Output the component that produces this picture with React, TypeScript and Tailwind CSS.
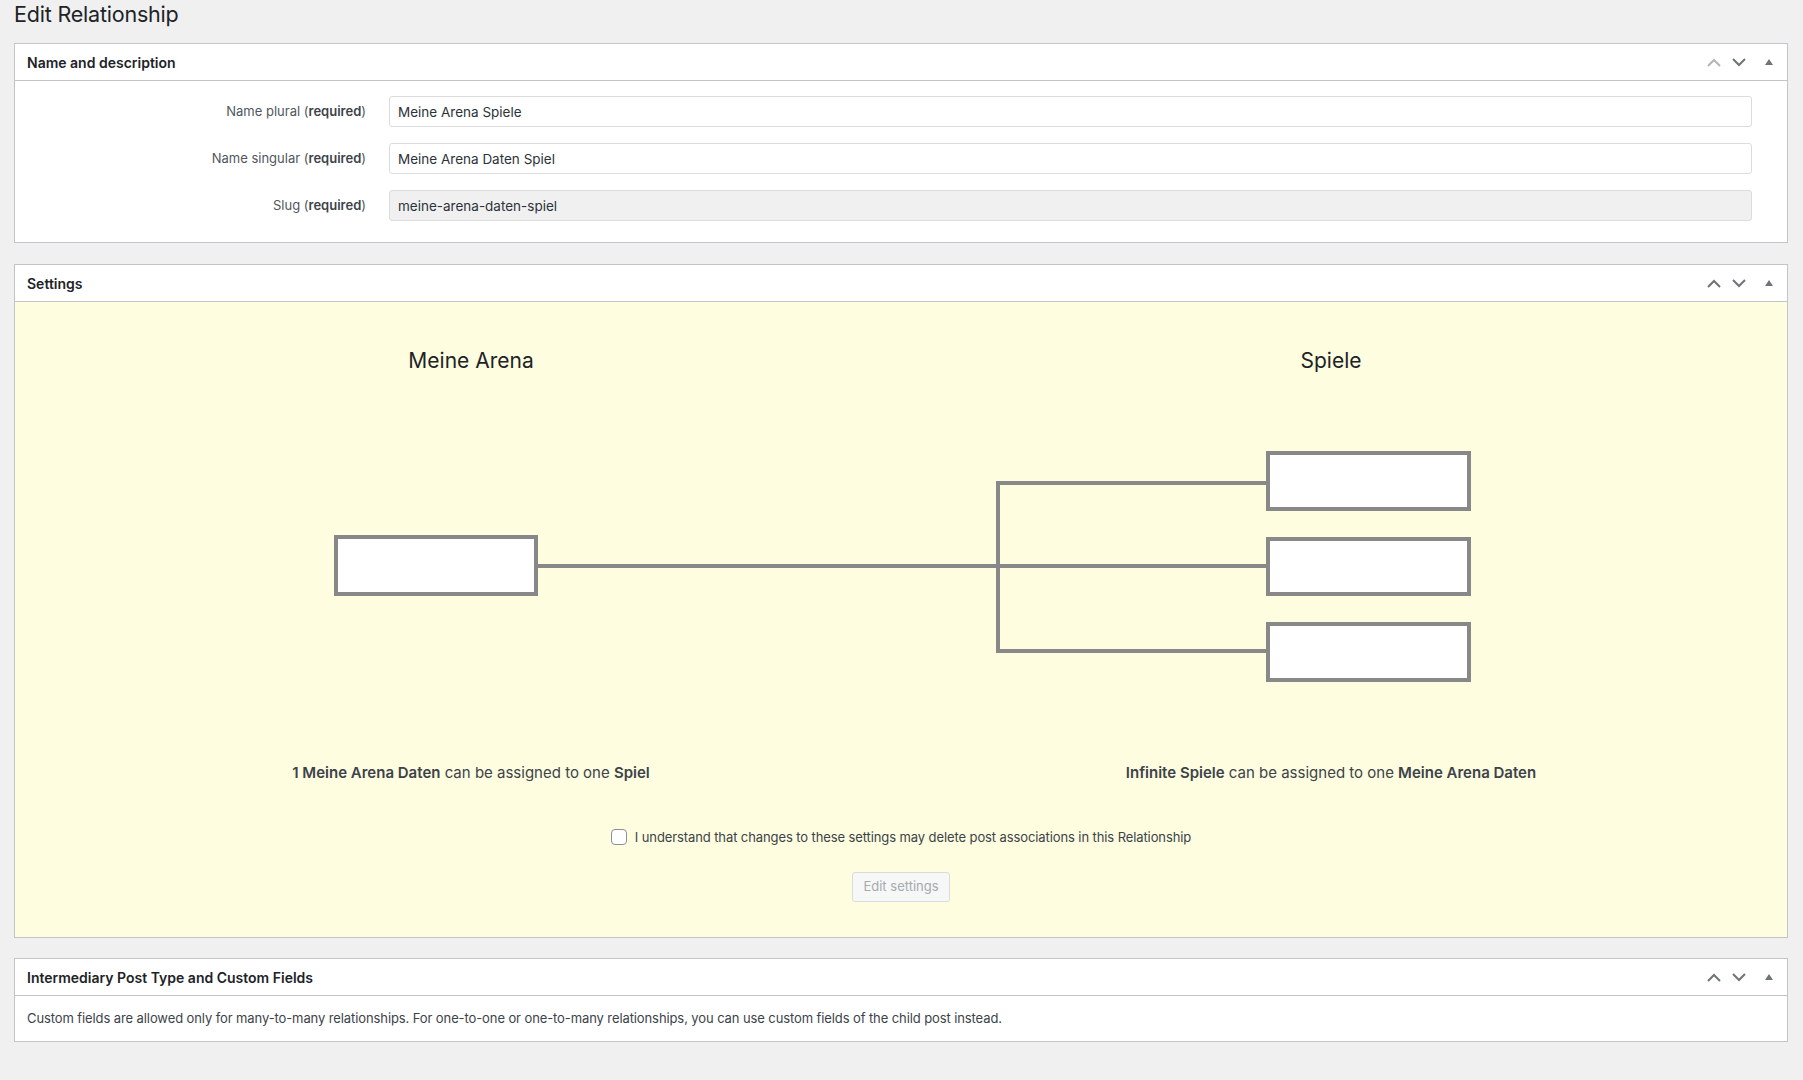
import React, { useState } from 'react';

const HeaderControls: React.FC<{ upDisabled?: boolean }> = ({ upDisabled }) => (
  <div className="flex items-center h-full">
    <button type="button" className="w-[25px] h-[36px] flex items-center justify-center">
      <svg width="14" height="9" viewBox="0 0 14 9" fill="none">
        <path d="M1 8 L7 2 L13 8" stroke={upDisabled ? '#b4b6b9' : '#6f747a'} strokeWidth="2" />
      </svg>
    </button>
    <button type="button" className="w-[25px] h-[36px] flex items-center justify-center">
      <svg width="14" height="9" viewBox="0 0 14 9" fill="none">
        <path d="M1 1 L7 7 L13 1" stroke="#6f747a" strokeWidth="2" />
      </svg>
    </button>
    <button type="button" className="w-[36px] h-[36px] flex items-center justify-center">
      <svg width="8" height="6" viewBox="0 0 8 6">
        <path d="M0 6 L4 0 L8 6 Z" fill="#6f747a" />
      </svg>
    </button>
  </div>
);

const Postbox: React.FC<{ title: string; upDisabled?: boolean; className?: string; children: React.ReactNode }> = ({
  title,
  upDisabled,
  className,
  children,
}) => (
  <div className={`bg-white border border-[#c3c4c7] ${className ?? ''}`}>
    <div className="flex items-center justify-between h-[37px] border-b border-[#c3c4c7]">
      <h2 className="pl-[12px] text-[14px] font-semibold text-[#1d2327]">{title}</h2>
      <HeaderControls upDisabled={upDisabled} />
    </div>
    {children}
  </div>
);

const FieldRow: React.FC<{ label: string; value: string; readOnly?: boolean }> = ({ label, value, readOnly }) => (
  <div className="flex items-center">
    <label className="w-[351px] text-right text-[13px] text-[#50575e]">
      {label} (<b className="font-semibold text-[#3c434a]">required</b>)
    </label>
    <input
      type="text"
      defaultValue={value}
      readOnly={readOnly}
      className={`ml-[23px] flex-1 h-[31px] px-[8px] text-[13.5px] text-[#2c3338] border border-[#dcdcde] rounded-[3px] outline-none ${
        readOnly ? 'bg-[#f0f0f1]' : 'bg-white'
      }`}
    />
  </div>
);

const Diagram: React.FC = () => (
  <svg width="1139" height="235" viewBox="0 0 1139 235" className="block mx-auto">
    <g stroke="#888888" strokeWidth="4" fill="none">
      <line x1="204" y1="117" x2="666" y2="117" />
      <polyline points="936,34 666,34 666,202 936,202" />
      <line x1="666" y1="117" x2="936" y2="117" />
    </g>
    <g stroke="#888888" strokeWidth="4" fill="#ffffff">
      <rect x="4" y="88" width="200" height="57" />
      <rect x="936" y="4" width="201" height="56" />
      <rect x="936" y="90" width="201" height="55" />
      <rect x="936" y="175" width="201" height="56" />
    </g>
  </svg>
);

export default function App() {
  const [understood, setUnderstood] = useState(false);

  return (
    <div className="min-h-screen bg-[#f0f0f1] text-[#3c434a] text-[13px] font-['Inter','Liberation_Sans',sans-serif]">
      <div className="pl-[14px] pr-[15px]">
        <h1 className="text-[21.5px] leading-[28px] font-normal text-[#1d2327] tracking-[-0.2px]">
          Edit Relationship
        </h1>

        <Postbox title="Name and description" upDisabled className="mt-[15px] mb-[21px]">
          <div className="pt-[15px] pb-[21px] pr-[35px] flex flex-col gap-[16px]">
            <FieldRow label="Name plural" value="Meine Arena Spiele" />
            <FieldRow label="Name singular" value="Meine Arena Daten Spiel" />
            <FieldRow label="Slug" value="meine-arena-daten-spiel" readOnly />
          </div>
        </Postbox>

        <Postbox title="Settings" className="mb-[20px]">
          <div className="bg-[#fefddf] pt-[45px] pb-[35px]">
            <div className="grid grid-cols-2 px-[26px]">
              <h3 className="text-center text-[21px] leading-[28px] font-normal text-[#1d2327]">Meine Arena</h3>
              <h3 className="text-center text-[21px] leading-[28px] font-normal text-[#1d2327]">Spiele</h3>
            </div>

            <div className="mt-[74px]">
              <Diagram />
            </div>

            <div className="grid grid-cols-2 px-[26px] mt-[79px] text-[15px] leading-[20px] text-[#3c434a]">
              <p className="text-center">
                <b className="font-semibold">1 Meine Arena Daten</b> can be assigned to one{' '}
                <b className="font-semibold">Spiel</b>
              </p>
              <p className="text-center">
                <b className="font-semibold">Infinite Spiele</b> can be assigned to one{' '}
                <b className="font-semibold">Meine Arena Daten</b>
              </p>
            </div>

            <label className="mt-[44px] flex items-center justify-center gap-[8px] leading-[20px] text-[13px] text-[#3c434a] tracking-[-0.1px]">
              <input
                type="checkbox"
                checked={understood}
                onChange={(e) => setUnderstood(e.target.checked)}
                className="appearance-none w-[16px] h-[16px] bg-white border border-[#8c8f94] rounded-[4px]"
              />
              I understand that changes to these settings may delete post associations in this Relationship
            </label>

            <div className="mt-[25px] flex justify-center">
              <button
                type="button"
                disabled={!understood}
                className="h-[30px] px-[10px] text-[13px] text-[#a7aaad] bg-[#f6f7f7] border border-[#dcdcde] rounded-[3px]"
              >
                Edit settings
              </button>
            </div>
          </div>
        </Postbox>

        <Postbox title="Intermediary Post Type and Custom Fields">
          <p className="px-[12px] pt-[12px] pb-[13px] leading-[20px] text-[13px] text-[#3c434a] tracking-[-0.1px]">
            Custom fields are allowed only for many-to-many relationships. For one-to-one or one-to-many
            relationships, you can use custom fields of the child post instead.
          </p>
        </Postbox>
      </div>
    </div>
  );
}
